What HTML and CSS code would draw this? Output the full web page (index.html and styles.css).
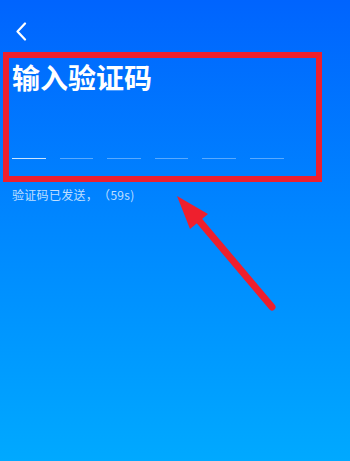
FILE: index.html
```html
<!DOCTYPE html>
<html lang="zh-CN">
<head>
<meta charset="utf-8">
<title>输入验证码</title>
<link rel="stylesheet" href="styles.css">
</head>
<body>
<div class="page">
  <header class="header">
    <svg class="back" width="12" height="19" viewBox="0 0 12 19">
      <path d="M10 1.5 L2.5 9.5 L10 17.5" fill="none" stroke="#fff" stroke-width="2.2" stroke-linecap="round" stroke-linejoin="round"/>
    </svg>
  </header>
  <h1 class="title">输入验证码</h1>
  <div class="code-row">
    <span class="cell active"></span>
    <span class="cell"></span>
    <span class="cell"></span>
    <span class="cell"></span>
    <span class="cell"></span>
    <span class="cell"></span>
  </div>
  <p class="hint">验证码已发送，（59s)</p>

  <div class="mark-box"></div>
  <svg class="mark-arrow" width="350" height="461" viewBox="0 0 350 461">
    <line x1="272" y1="307" x2="196" y2="217" stroke="#ee1f2d" stroke-width="7" stroke-linecap="round"/>
    <polygon points="177,196 208,214 190,229" fill="#ee1f2d"/>
  </svg>
</div>
</body>
</html>
```

FILE: styles.css
```css
* { box-sizing: border-box; }
html, body { margin: 0; padding: 0; }
body {
  width: 350px;
  height: 461px;
  overflow: hidden;
  font-family: "Noto Sans CJK SC", "Noto Sans", sans-serif;
  background: linear-gradient(180deg, #0064fe 0%, #0088ff 50%, #00a9ff 100%);
}
.page {
  position: relative;
  height: 461px;
  padding: 0 12px;
}
.header {
  height: 57px;
  display: flex;
  align-items: flex-start;
  padding-top: 22px;
  padding-left: 3px;
}
.back { display: block; }
.title {
  margin: 0;
  font-size: 28px;
  line-height: 40px;
  font-weight: 700;
  color: #fff;
  letter-spacing: 0;
}
.code-row {
  margin-top: 22px;
  display: flex;
  gap: 14px;
}
.cell {
  width: 33.6px;
  height: 40px;
  border-bottom: 1px solid rgba(255, 255, 255, 0.35);
}
.cell.active { border-bottom-color: rgba(255, 255, 255, 0.8); }
.hint {
  margin: 27px 0 0;
  font-size: 12px;
  line-height: 18px;
  color: rgba(255, 255, 255, 0.75);
  text-spacing-trim: space-all;
  letter-spacing: 0.3px;
}
.mark-box {
  position: absolute;
  left: 3px;
  top: 52px;
  width: 319px;
  height: 130px;
  border: 6px solid #ee1f2d;
}
.mark-arrow {
  position: absolute;
  left: 0;
  top: 0;
  pointer-events: none;
}
```
